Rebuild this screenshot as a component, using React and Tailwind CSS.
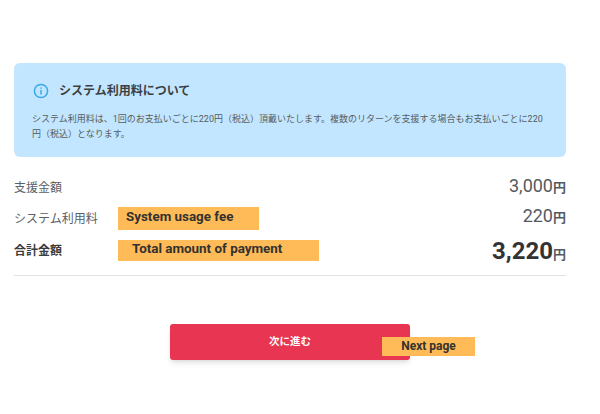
const font = { jp: 'font-["Roboto","Noto_Sans_CJK_JP",sans-serif]' };

function Note({ className, children }) {
  return (
    <div className={`absolute bg-[#ffbb58] text-[#33322e] font-bold font-['Roboto','Liberation_Sans',sans-serif] ${className}`}>
      {children}
    </div>
  );
}

function Row({ label, amount, bold, rowClass, amountClass = '' }) {
  return (
    <div className={`flex justify-between items-center ${rowClass}`}>
      <span className={`text-[12px] ${bold ? 'font-bold text-[#3c3c3c]' : 'text-[#5a6068]'}`}>{label}</span>
      <span className={`flex items-baseline ${amountClass} ${bold ? 'font-bold text-[#333]' : 'text-[#555a60]'}`}>
        <span className={bold ? 'text-[24px]' : 'text-[18px]'}>{amount}</span>
        <span className="text-[13px] font-bold text-[#555a60]">円</span>
      </span>
    </div>
  );
}

export default function App() {
  return (
    <div className={`relative w-[600px] h-[414px] bg-white overflow-hidden pt-[63px] pl-[14px] pr-[34px] ${font.jp}`}>
      <div className="h-[94px] bg-[#c2e6ff] rounded-[6px] px-[18px] pt-[18px]">
        <div className="flex items-center gap-[10px] ml-[1px]">
          <svg width="16" height="16" viewBox="0 0 16 16" fill="none" stroke="#38a9ea" strokeWidth="1.5">
            <circle cx="8" cy="8" r="6.6" />
            <path d="M8 7v4.4M8 4.4v1.4" />
          </svg>
          <h2 className="text-[12px] leading-[18px] font-bold text-[#3c3f42] pt-[1px]">システム利用料について</h2>
        </div>
        <p className="mt-[12px] text-[9px] leading-[15px] text-[#565c60]">
          システム利用料は、1回のお支払いごとに220円（税込）頂戴いたします。複数のリターンを支援する場合もお支払いごとに220
          <br />
          円（税込）となります。
        </p>
      </div>

      <div className="mt-[17px] border-b border-[#e2e2e2] h-[102px]">
        <Row label="支援金額" amount="3,000" rowClass="h-[27px]" amountClass="pb-[4px]" />
        <Row label="システム利用料" amount="220" rowClass="h-[36px]" amountClass="pb-[7px]" />
        <Row label="合計金額" amount="3,220" bold rowClass="h-[28px]" />
      </div>

      <div className="flex justify-center mt-[48px]">
        <button className="w-[240px] h-[36px] rounded-[3px] bg-[#e83551] text-white text-[10.5px] font-bold shadow-md">
          次に進む
        </button>
      </div>

      <Note className="left-[118px] top-[207px] w-[141px] h-[23px] pl-[8px] text-[13.4px] leading-[20px]">System usage fee</Note>
      <Note className="left-[118px] top-[240px] w-[201px] h-[21px] pl-[14px] text-[13.4px] leading-[18px]">Total amount of payment</Note>
      <Note className="left-[382px] top-[337px] w-[93px] h-[19px] text-center text-[12px] leading-[19px]">Next page</Note>
    </div>
  );
}
